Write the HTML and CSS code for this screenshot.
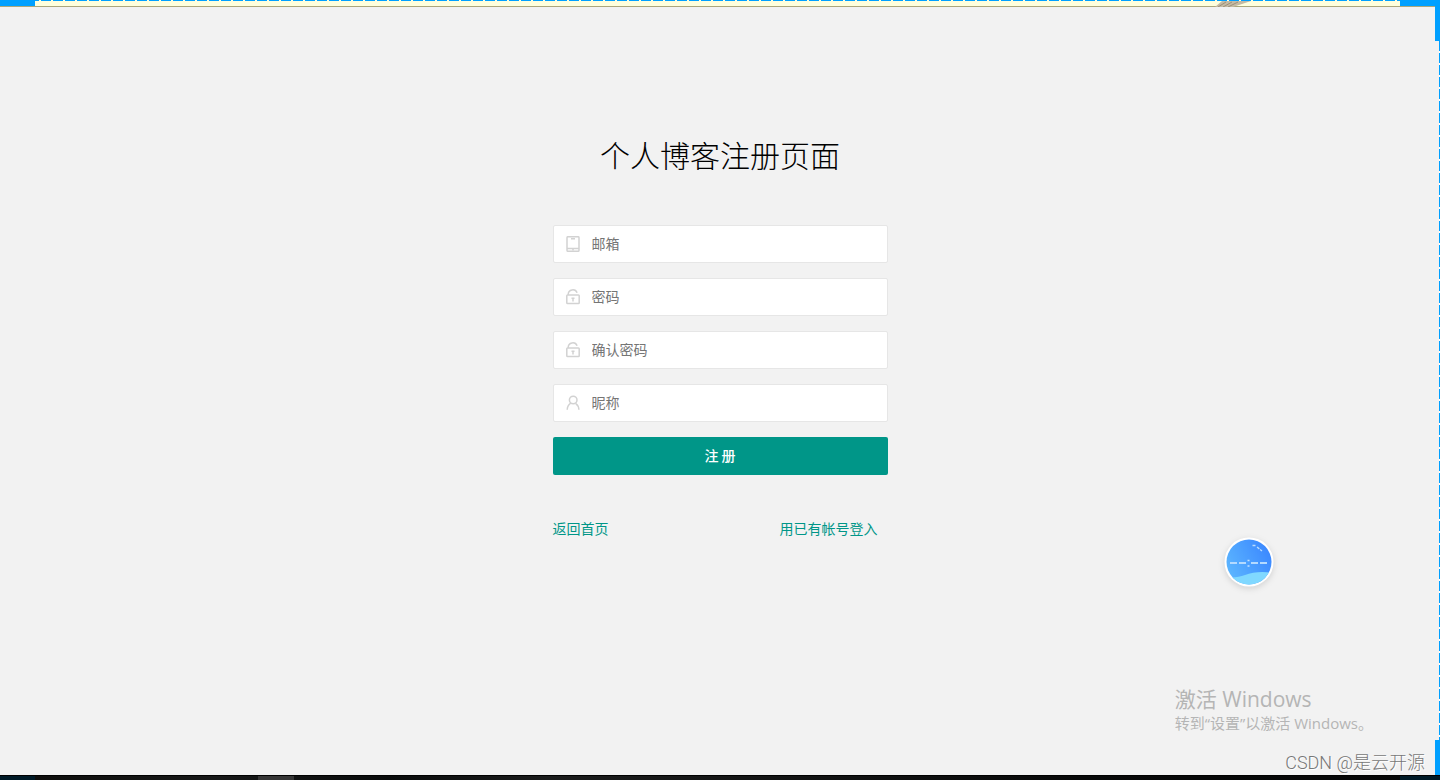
FILE: index.html
```html
<!DOCTYPE html>
<html lang="zh-CN">
<head>
<meta charset="utf-8">
<meta name="viewport" content="width=device-width, initial-scale=1">
<title>个人博客注册页面</title>
<link rel="stylesheet" href="styles.css">
</head>
<body>
<div class="top-strip">
  <svg class="feather" width="36" height="6" viewBox="0 0 36 6" aria-hidden="true"><path d="M0 6L7 0h29l-9 3-9 3z" fill="#c4baa3"/><path d="M3 6l8-5M8 6l9-5M13 6l10-5" stroke="#9c8f78" fill="none"/></svg>
</div>
<main class="page">
  <h1 class="title">个人博客注册页面</h1>
  <form class="form">
    <div class="field">
      <label class="icon" for="email" aria-label="邮箱"><svg width="16" height="16" viewBox="0 0 16 16"><rect x="2" y=".7" width="12" height="14.6" rx="1"/><path d="M2 12.400h12M6 2.700h4M8 13v1.500"/></svg></label>
      <input class="input" id="email" type="text" placeholder="邮箱">
    </div>
    <div class="field">
      <label class="icon" for="password" aria-label="密码"><svg width="16" height="16" viewBox="0 0 16 16"><rect x="1.800" y="6" width="12.400" height="8.500" rx=".8"/><path d="M3.200 6V5.400a4.600 4.600 0 0 1 8.900-1.600M8 8.500v4M6.500 9.300h3"/></svg></label>
      <input class="input" id="password" type="password" placeholder="密码">
    </div>
    <div class="field">
      <label class="icon" for="repeat" aria-label="确认密码"><svg width="16" height="16" viewBox="0 0 16 16"><rect x="1.800" y="6" width="12.400" height="8.500" rx=".8"/><path d="M3.200 6V5.400a4.600 4.600 0 0 1 8.900-1.600M8 8.500v4M6.500 9.300h3"/></svg></label>
      <input class="input" id="repeat" type="password" placeholder="确认密码">
    </div>
    <div class="field">
      <label class="icon" for="nickname" aria-label="昵称"><svg width="16" height="16" viewBox="0 0 16 16"><circle cx="8.200" cy="5" r="3.800"/><path d="M2.200 14.800c.1-3.300 1.400-5.300 3.700-6.600M10.800 8.600c1.900 1.300 3 3.300 3.100 6.200"/></svg></label>
      <input class="input" id="nickname" type="text" placeholder="昵称">
    </div>
    <button class="submit" type="button">注 册</button>
    <nav class="links">
      <a class="link" href="#">返回首页</a>
      <a class="link" href="#">用已有帐号登入</a>
    </nav>
  </form>
</main>
<div class="taskbar"><span class="taskbar-start"></span><span class="taskbar-active"></span><span class="taskbar-end"></span></div>

<div class="corner corner-left"></div>
<div class="corner corner-right"></div>
<div class="side-rail"></div>
<svg class="bubble" width="60" height="60" viewBox="0 0 60 60" aria-hidden="true">
  <defs>
    <linearGradient id="sky" x1="0" y1=".7" x2="1" y2=".2"><stop offset="0" stop-color="#5cb6ff"/><stop offset="1" stop-color="#3a86ff"/></linearGradient>
    <clipPath id="disc"><circle cx="30" cy="28" r="22.5"/></clipPath>
  </defs>
  <circle cx="30" cy="28" r="24.5" fill="#fff"/>
  <circle cx="30" cy="28" r="22.5" fill="url(#sky)"/>
  <path clip-path="url(#disc)" d="M6 43c9 1 14 0 20-2 8-3 17-4 29-2v16H6z" fill="#80d8ff"/>
  <path d="M11 29h7M20 29h7M32 29h7M41 29h7" stroke="#b4daff" stroke-width="2"/>
  <path d="M28.500 26.500h2M28.500 32h2" stroke="#c4e2ff" stroke-width="1.500"/>
  <path d="M33.500 11.500h3M38 13l5 4" stroke="#b9dcff" stroke-width="1.300" stroke-dasharray="3 1"/>
</svg>
<aside class="activate">
  <p class="activate-title">激活 Windows</p>
  <p class="activate-text">转到“设置”以激活 Windows。</p>
</aside>
<div class="credit">CSDN @是云开源</div>
</body>
</html>
```
FILE: styles.css
```css
* {
  box-sizing: border-box;
}

body {
  display: flex;
  flex-direction: column;
  min-height: 100vh;
  margin: 0;
  background: #f2f2f2;
  color: #000;
  font: 14px/20px "Noto Sans CJK SC", sans-serif;
}

.top-strip {
  height: 7px;
  border-bottom: 1px solid #aaa77c;
  background: linear-gradient(90deg, #ffffdc 2px, #00a0ff 2px) 3px 0 / 12px 1px repeat-x, #ffffdc;
}

.feather {
  position: absolute;
  top: 1px;
  right: 189px;
}

.page {
  flex: 1;
  padding: 127px 20px 40px;
}

.title {
  margin: 0 0 51px;
  font-size: 30px;
  font-weight: 300;
  line-height: 40px;
  text-align: center;
}

.form {
  display: flex;
  flex-direction: column;
  gap: 15px;
  max-width: 335px;
  margin: 0 auto;
}

.field {
  display: flex;
  align-items: center;
  height: 38px;
  border: 1px solid #e6e6e6;
  border-radius: 2px;
  background: #fff;
}

.icon {
  display: flex;
  flex: none;
  justify-content: center;
  width: 38px;
}

.icon svg {
  fill: none;
  stroke: #d2d2d2;
  stroke-width: 1.5;
}

.input {
  flex: 1;
  min-width: 0;
  height: 100%;
  padding: 0 0 2px;
  border: 0;
  outline: 0;
  background: transparent;
  font: inherit;
}

.input::placeholder {
  color: #757575;
  opacity: 1;
}

.submit {
  height: 38px;
  padding: 0 18px 2px;
  border: 0;
  border-radius: 2px;
  background: #009688;
  color: #fff;
  font: inherit;
  font-weight: 500;
  cursor: pointer;
}

.links {
  display: flex;
  justify-content: space-between;
  margin-top: 28px;
  padding-right: 10px;
}

.link {
  color: #009688;
  text-decoration: none;
}

.taskbar {
  display: flex;
  height: 5px;
  border-top: 1px solid #000;
  background: linear-gradient(90deg, #0c0c0a, #171818 15%, #090b0b 27%, #1b1c1c 38%, #080909 75%, #050606);
}

.taskbar-start {
  width: 35px;
  background: #001a27;
}

.taskbar-active {
  width: 36px;
  margin-left: 223px;
  background: #363636;
}

.taskbar-end {
  width: 40px;
  margin-left: auto;
  background: #001a27;
}

.corner {
  position: absolute;
  top: 0;
  height: 6px;
  background: #00a0ff;
}

.corner-left {
  left: 0;
  width: 35px;
}

.corner-right {
  right: 0;
  width: 40px;
}

.side-rail {
  position: absolute;
  top: 0;
  right: 0;
  bottom: 5px;
  width: 5px;
  background:
    linear-gradient(#00a0ff, #00a0ff) 0 0 / 5px 41px no-repeat,
    linear-gradient(#00a0ff, #00a0ff) 0 100% / 5px 35px no-repeat,
    linear-gradient(#fff 2px, #00a0ff 2px) 4px 3px / 1px 12px repeat-y;
}

.bubble {
  position: absolute;
  right: 161px;
  bottom: 186px;
  filter: drop-shadow(0 2px 3px #0002);
}

.activate {
  position: absolute;
  right: 67px;
  bottom: 46px;
  color: #b5b5b5;
  font-family: "Open Sans", "Noto Sans CJK SC", sans-serif;
}

.activate-title {
  margin: 0;
  font-size: 21px;
  line-height: 26px;
}

.activate-text {
  margin: 0;
  font-size: 15px;
  line-height: 22px;
}

.credit {
  position: absolute;
  right: 15px;
  bottom: 5px;
  color: #777;
  font: 300 18px/24px Roboto, "Noto Sans CJK SC", sans-serif;
  text-shadow: 1px 1px 0 #fff;
}
```
